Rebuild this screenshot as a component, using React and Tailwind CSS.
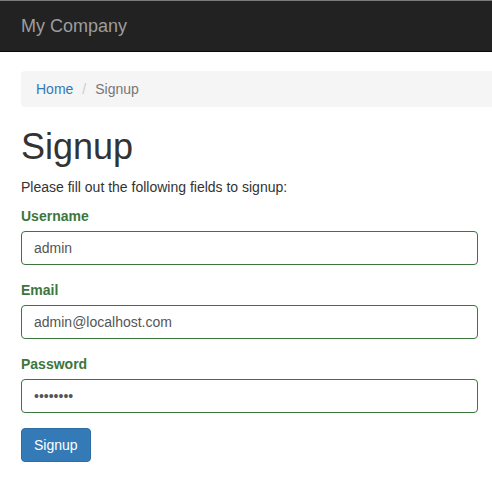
export default function App() {
  return (
    <div
      className="min-h-screen bg-white text-[14px] leading-[20px] text-[#333]"
      style={{ fontFamily: '"Liberation Sans", Arial, sans-serif' }}
    >
      <nav className="h-[52px] border-t border-t-[#7a7a7a] border-b border-b-[#080808] bg-[#222]">
        <div className="px-[21px] py-[15px]">
          <a href="#" className="text-[18px] leading-[20px] text-[#9d9d9d]">
            My Company
          </a>
        </div>
      </nav>

      <div className="pl-[21px]">
        <ol className="mt-[19px] mb-[20px] flex h-[36px] items-center rounded-l-[4px] bg-[#f5f5f5] px-[15px]">
          <li>
            <a href="#" className="text-[#337ab7]">
              Home
            </a>
          </li>
          <li className="px-[9px] text-[#ccc]">/</li>
          <li className="text-[#777]">Signup</li>
        </ol>

        <div className="pr-[14px]">
          <h1 className="text-[36px] leading-[40px] font-normal">Signup</h1>
          <p className="mt-[10px] mb-[9px]">Please fill out the following fields to signup:</p>

          <form>
            <div className="mb-[15px]">
              <label className="mb-[5px] block font-bold text-[#3c763d]">Username</label>
              <input
                type="text"
                defaultValue="admin"
                className="h-[34px] w-full rounded-[4px] border border-[#3c763d] px-[12px] text-[14px] text-[#555] outline-none"
              />
            </div>
            <div className="mb-[15px]">
              <label className="mb-[5px] block font-bold text-[#3c763d]">Email</label>
              <input
                type="text"
                defaultValue="admin@localhost.com"
                className="h-[34px] w-full rounded-[4px] border border-[#3c763d] px-[12px] text-[14px] text-[#555] outline-none"
              />
            </div>
            <div className="mb-[15px]">
              <label className="mb-[5px] block font-bold text-[#3c763d]">Password</label>
              <input
                type="password"
                defaultValue="admin123"
                className="h-[34px] w-full rounded-[4px] border border-[#3c763d] px-[12px] text-[14px] text-[#555] outline-none"
              />
            </div>
            <button
              type="button"
              className="h-[34px] rounded-[4px] border border-[#2e6da4] bg-[#337ab7] px-[12px] text-[14px] text-white"
            >
              Signup
            </button>
          </form>
        </div>
      </div>
    </div>
  );
}
